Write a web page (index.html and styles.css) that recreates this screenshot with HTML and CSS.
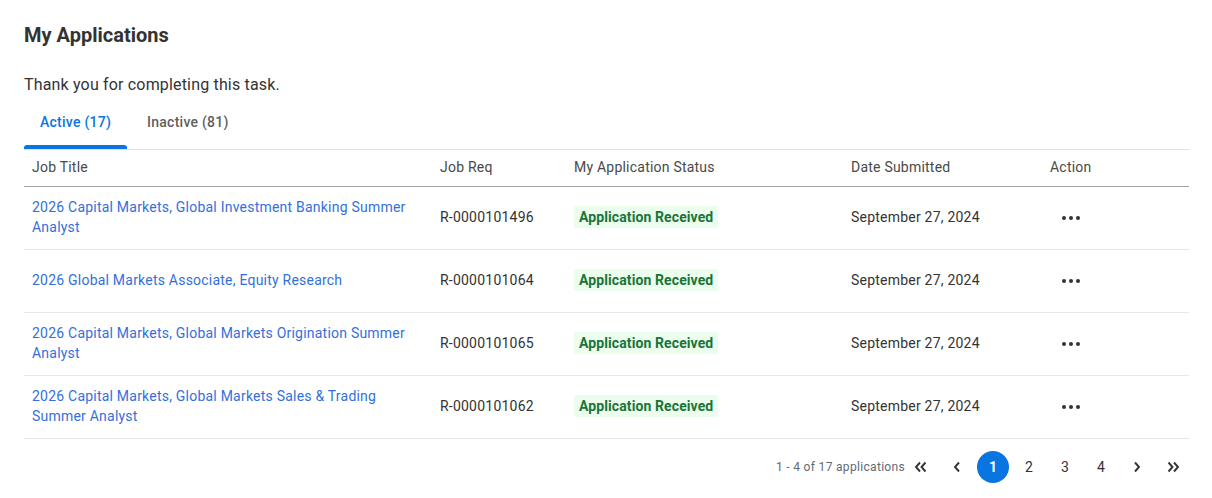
FILE: index.html
```html
<!DOCTYPE html>
<html>
<head>
<meta charset="utf-8">
<link rel="stylesheet" href="styles.css">
</head>
<body>
<div class="page">
  <h1 class="title">My Applications</h1>
  <p class="intro">Thank you for completing this task.</p>
  <div class="tabs">
    <div class="tab active">Active (17)</div>
    <div class="tab">Inactive (81)</div>
  </div>
  <table class="grid">
    <colgroup>
      <col class="c1"><col class="c2"><col class="c3"><col class="c4"><col class="c5">
    </colgroup>
    <thead>
      <tr><th>Job Title</th><th>Job Req</th><th>My Application Status</th><th>Date Submitted</th><th>Action</th></tr>
    </thead>
    <tbody>
      <tr>
        <td><a class="link">2026 Capital Markets, Global Investment Banking Summer Analyst</a></td>
        <td>R-0000101496</td>
        <td><span class="badge">Application Received</span></td>
        <td>September 27, 2024</td>
        <td><span class="dots"><i></i><i></i><i></i></span></td>
      </tr>
      <tr>
        <td><a class="link">2026 Global Markets Associate, Equity Research</a></td>
        <td>R-0000101064</td>
        <td><span class="badge">Application Received</span></td>
        <td>September 27, 2024</td>
        <td><span class="dots"><i></i><i></i><i></i></span></td>
      </tr>
      <tr>
        <td><a class="link">2026 Capital Markets, Global Markets Origination Summer Analyst</a></td>
        <td>R-0000101065</td>
        <td><span class="badge">Application Received</span></td>
        <td>September 27, 2024</td>
        <td><span class="dots"><i></i><i></i><i></i></span></td>
      </tr>
      <tr>
        <td><a class="link">2026 Capital Markets, Global Markets Sales &amp; Trading Summer Analyst</a></td>
        <td>R-0000101062</td>
        <td><span class="badge">Application Received</span></td>
        <td>September 27, 2024</td>
        <td><span class="dots"><i></i><i></i><i></i></span></td>
      </tr>
    </tbody>
  </table>
  <div class="pager">
    <span class="count">1 - 4 of 17 applications</span>
    <span class="pbtn"><svg width="14" height="12" viewBox="0 0 14 12"><path d="M6 1.5L2 6l4 4.5M11.5 1.5L7.5 6l4 4.5" fill="none" stroke="#333" stroke-width="1.9"/></svg></span>
    <span class="pbtn"><svg width="10" height="12" viewBox="0 0 10 12"><path d="M7 1.5L3 6l4 4.5" fill="none" stroke="#333" stroke-width="1.9"/></svg></span>
    <span class="pbtn current">1</span>
    <span class="pbtn">2</span>
    <span class="pbtn">3</span>
    <span class="pbtn">4</span>
    <span class="pbtn"><svg width="10" height="12" viewBox="0 0 10 12"><path d="M3 1.5L7 6l-4 4.5" fill="none" stroke="#333" stroke-width="1.9"/></svg></span>
    <span class="pbtn"><svg width="14" height="12" viewBox="0 0 14 12"><path d="M2.5 1.5L6.5 6l-4 4.5M8 1.5L12 6l-4 4.5" fill="none" stroke="#333" stroke-width="1.9"/></svg></span>
  </div>
</div>
</body>
</html>
```

FILE: styles.css
```css
* { box-sizing: border-box; }
html, body { margin: 0; padding: 0; background: #fff; }
body {
  font-family: Roboto, "Liberation Sans", Arial, sans-serif;
  color: #333333;
}
.page {
  width: 1165px;
  margin-left: 24px;
  padding-top: 23px;
}
.title {
  margin: 0;
  font-size: 20px;
  line-height: 24px;
  font-weight: 700;
  color: #333333;
}
.intro {
  margin: 26px 0 0 0;
  font-size: 16px;
  line-height: 24px;
  letter-spacing: 0.17px;
  color: #333333;
}
.tabs {
  display: flex;
  gap: 4px;
  margin-top: 4px;
  border-bottom: 1px solid #dfe2e6;
}
.tab {
  height: 48px;
  padding: 11px 16px 0 16px;
  font-size: 14px;
  line-height: 20px;
  letter-spacing: 0.25px;
  font-weight: 500;
  color: #5f5f5f;
  position: relative;
}
.tab.active { color: #0875e1; }
.tab.active::after {
  content: "";
  position: absolute;
  left: 0; right: 0; bottom: 0;
  height: 4px;
  background: #0875e1;
  border-radius: 3px 3px 0 0;
}
.grid {
  width: 100%;
  border-collapse: collapse;
  table-layout: fixed;
  font-size: 14px;
  letter-spacing: 0.22px;
}
.c1 { width: 408px; }
.c2 { width: 134px; }
.c3 { width: 277px; }
.c4 { width: 199px; }
.c5 { width: 147px; }
.grid th {
  height: 36px;
  text-align: left;
  font-weight: 400;
  color: #494949;
  padding: 0 8px 1px 8px;
  line-height: 20px;
  border-bottom: 1px solid #9ea4ab;
  vertical-align: middle;
}
.grid td {
  height: 63px;
  padding: 0 8px 1px 8px;
  line-height: 20px;
  color: #333333;
  vertical-align: middle;
  border-bottom: 1px solid #e6e8eb;
}
.link {
  color: #3470dc;
  text-decoration: none;
}
.badge {
  display: inline-block;
  background: #ebfded;
  color: #1b7438;
  font-weight: 700;
  padding: 1px 5px;
  border-radius: 2px;
  line-height: 20px;
  letter-spacing: 0.1px;
}
.dots {
  display: inline-flex;
  gap: 3px;
  margin-left: 12px;
  vertical-align: middle;
}
.dots i {
  display: block;
  width: 4px;
  height: 4px;
  border-radius: 50%;
  background: #333;
}
.pager {
  display: flex;
  justify-content: flex-end;
  align-items: center;
  gap: 4px;
  margin-top: 12px;
}
.count {
  font-size: 12px;
  letter-spacing: 0.32px;
  color: #5e6a75;
  margin-right: -4px;
}
.pbtn {
  width: 32px;
  height: 32px;
  border-radius: 50%;
  display: flex;
  align-items: center;
  justify-content: center;
  font-size: 14px;
  color: #333;
}
.pbtn.current {
  background: #0875e1;
  color: #fff;
  font-weight: 700;
}
```
